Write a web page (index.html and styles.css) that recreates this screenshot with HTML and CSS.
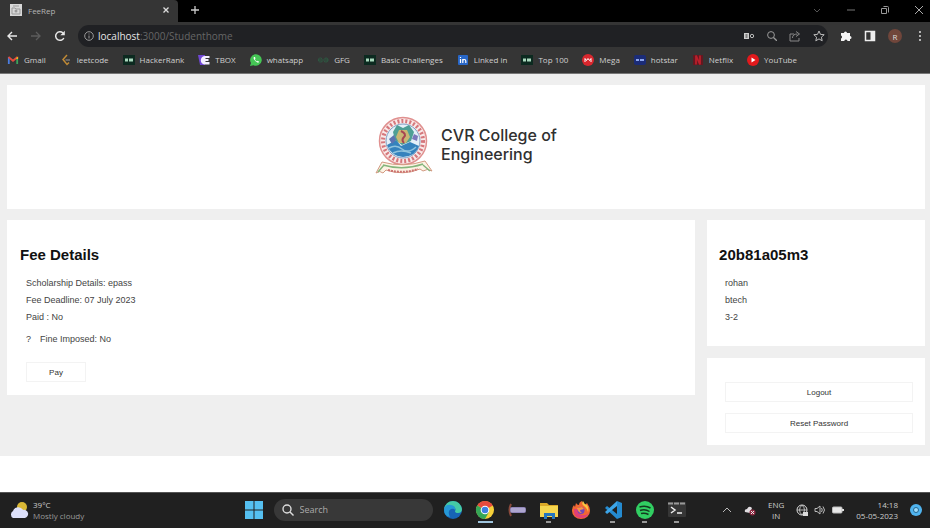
FILE: index.html
```html
<!DOCTYPE html>
<html lang="en">
<head>
<meta charset="utf-8">
<title>FeeRep</title>
<link rel="stylesheet" href="styles.css">
</head>
<body>
<header class="browser">
  <div class="tabs">
    <div class="tab">
      <svg class="i12" viewBox="0 0 12 12"><rect width="12" height="12" fill="#d8d8d8"/><path d="M2 4h3l1 1h4v5H2zM3 2h6" fill="none" stroke="#999"/><circle cx="6" cy="7" r="1.5" fill="#999"/></svg>
      <span class="tab-title">FeeRep</span>
      <button class="icon-btn" aria-label="Close tab"><svg class="i8" viewBox="0 0 8 8"><path d="M1.500 1.500l5 5m0-5l-5 5" stroke="#ddd" stroke-width="1.300"/></svg></button>
    </div>
    <button class="icon-btn new-tab" aria-label="New tab"><svg class="i8" viewBox="0 0 8 8"><path d="M4 0v8M0 4h8" stroke="#ccc" stroke-width="1.300"/></svg></button>
    <div class="window-controls">
      <button class="icon-btn" aria-label="Tab search"><svg class="i8" viewBox="0 0 8 8"><path d="M1 3l3 3 3-3" fill="none" stroke="#555"/></svg></button>
      <button class="icon-btn" aria-label="Minimise"><svg class="i8" viewBox="0 0 8 8"><path d="M0 4h8" stroke="#777"/></svg></button>
      <button class="icon-btn" aria-label="Restore"><svg class="i8" viewBox="0 0 8 8"><path d="M.5 2.500h5v5h-5zM2.500 .5h4q1 0 1 1v5" fill="none" stroke="#999"/></svg></button>
      <button class="icon-btn" aria-label="Close"><svg class="i8" viewBox="0 0 8 8"><path d="M0 0l8 8M8 0L0 8" stroke="#aaa"/></svg></button>
    </div>
  </div>
  <div class="toolbar">
    <button class="icon-btn" aria-label="Back"><svg class="i12" viewBox="0 0 12 12"><path d="M11 6H2m4-4L2 6l4 4" fill="none" stroke="#e8e8e8" stroke-width="1.400"/></svg></button>
    <button class="icon-btn" aria-label="Forward"><svg class="i12" viewBox="0 0 12 12"><path d="M1 6h9M6 2l4 4-4 4" fill="none" stroke="#5c5c5c" stroke-width="1.300"/></svg></button>
    <button class="icon-btn" aria-label="Reload"><svg class="i12" viewBox="0 0 12 12"><path d="M9.800 8A4.300 4.300 0 1 1 9 3" fill="none" stroke="#e8e8e8" stroke-width="1.500"/><path d="M10.800 .8v4.500H6.300z" fill="#e8e8e8"/></svg></button>
    <label class="address">
      <svg class="i10" viewBox="0 0 10 10"><circle cx="5" cy="5" r="4.300" fill="none" stroke="#999"/><path d="M5 4.500V7.500M5 2.500v1" stroke="#999"/></svg>
      <span class="url"><b>localhost</b>:3000/Studenthome</span>
      <svg class="i12" viewBox="0 0 12 12"><path d="M1 3h5v6H1z" fill="#ccc"/><path d="M2.500 5h2m-2 2h2" stroke="#333"/><circle cx="9" cy="6" r="1.700" fill="none" stroke="#bbb"/></svg>
      <svg class="i10" viewBox="0 0 10 10"><circle cx="4" cy="4" r="3.400" fill="none" stroke="#999"/><path d="M6.500 6.500L10 10" stroke="#999" stroke-width="1.300"/></svg>
      <svg class="i12" viewBox="0 0 12 12"><path d="M5 4H1v7h9V8M3.500 8q0-4 5-4M7 1.500L10.500 4 7 6.500" fill="none" stroke="#888"/></svg>
      <svg class="i12" viewBox="0 0 12 12"><path d="M6 1l1.500 3.400 3.700.3-2.800 2.500.8 3.600L6 8.900l-3.200 1.900.8-3.600L.8 4.700l3.700-.3z" fill="none" stroke="#bbb"/></svg>
    </label>
    <button class="icon-btn" aria-label="Extensions"><svg class="i12" viewBox="0 0 12 12"><path d="M1 3h3a1.500 1.500 0 1 1 3 0h3v3a1.500 1.500 0 1 1 0 3v2H7.500a1.600 1.600 0 0 0-3.200 0H1V8.500a1.600 1.600 0 0 0 0-3z" fill="#f5f5f5"/></svg></button>
    <button class="icon-btn" aria-label="Side panel"><svg class="i12" viewBox="0 0 12 12"><path d="M1.500 1.500h9v9h-9z" fill="none" stroke="#eee" stroke-width="1.500"/><path d="M6.500 1h4v10h-4z" fill="#eee"/></svg></button>
    <button class="icon-btn avatar" aria-label="Profile">R</button>
    <button class="icon-btn" aria-label="Menu"><svg class="i12" viewBox="0 0 12 12"><g fill="#ddd"><circle cx="6" cy="2" r="1"/><circle cx="6" cy="6" r="1"/><circle cx="6" cy="10" r="1"/></g></svg></button>
  </div>
  <nav class="bookmarks" aria-label="Bookmarks">
    <a href="#"><svg class="i12" viewBox="0 0 12 12"><path d="M1.800 10V3" stroke="#4b7de0" stroke-width="1.800"/><path d="M10.200 10V3" stroke="#3ba55c" stroke-width="1.800"/><path d="M1.500 3L6 6.800 10.500 3" fill="none" stroke="#e34a3d" stroke-width="1.800"/><path d="M9.300 4l1.800-1.500V5H9.300z" fill="#f1b51c"/></svg>Gmail</a>
    <a href="#"><svg class="i12" viewBox="0 0 12 12"><path d="M7 1L3 5.500 7 10.500l2-2" fill="none" stroke="#c08a35" stroke-width="1.500"/><path d="M5.500 6H10" stroke="#999"/></svg>leetcode</a>
    <a href="#"><svg class="i12" viewBox="0 0 12 12"><path d="M0 1h12v10H0z" fill="#0c2a20"/><path d="M2 4.500h3v3H2zm4 0h4v3H6z" fill="#a9d9bd"/></svg>HackerRank</a>
    <a href="#"><svg class="i12" viewBox="0 0 12 12"><path d="M0 1h7v10H2z" fill="#7047d4"/><path d="M11.500 2H7a4 4 0 0 0 0 8.500h4.500V8H7.500V7h3V5h-3V4h4z" fill="#f4f0ff"/></svg>TBOX</a>
    <a href="#"><svg class="i12" viewBox="0 0 12 12"><path d="M0 12l1-3a5.800 5.800 0 1 1 2.400 2.200z" fill="#45c655"/><path d="M4 3q-1 1 .5 3T8 8.800L9.200 8 7.800 6.800l-.8.7Q5.500 6.500 4.900 5.200l.6-.7L5 3z" fill="#fff"/></svg>whatsapp</a>
    <a href="#"><svg class="i12" viewBox="0 0 12 12"><path d="M5 4.500Q1.500 3 1.500 6H11Q11 3 7.500 4.500M1.500 6q0 3 4 1.500M11 6q0 3-4 1.500" fill="none" stroke="#2d5b43"/></svg>GFG</a>
    <a href="#"><svg class="i12" viewBox="0 0 12 12"><path d="M0 1h12v10H0z" fill="#0c2a20"/><path d="M2 4.500h3v3H2zm4 0h4v3H6z" fill="#a9d9bd"/></svg>Basic Challenges</a>
    <a href="#"><svg class="i12" viewBox="0 0 12 12"><rect x="1" y="1" width="10" height="10" rx="1" fill="#2867c8"/><path d="M3.500 5v4M3.500 3v1M5.800 9V5m0 2q0-1.500 1.500-1.500T8.800 7v2" fill="none" stroke="#fff" stroke-width="1.200"/></svg>Linked in</a>
    <a href="#"><svg class="i12" viewBox="0 0 12 12"><path d="M0 1h12v10H0z" fill="#0c2a20"/><path d="M2 4.500h3v3H2zm4 0h4v3H6z" fill="#a9d9bd"/></svg>Top 100</a>
    <a href="#"><svg class="i12" viewBox="0 0 12 12"><circle cx="6" cy="6" r="6" fill="#d9272e"/><path d="M3 8V4.500l1.500 2L6 4.500 7.500 6.500 9 4.500V8" fill="none" stroke="#fff"/></svg>Mega</a>
    <a href="#"><svg class="i12" viewBox="0 0 12 12"><rect y="1" width="12" height="10" rx="2" fill="#1b2c77"/><path d="M2 6h3m1 0h4" stroke="#8ba5ee" stroke-width="2"/></svg>hotstar</a>
    <a href="#"><svg class="i12" viewBox="0 0 12 12"><path d="M1 1h10v10H1z" fill="#641820"/><path d="M4 10.500v-9l4 9v-9" fill="none" stroke="#b91f2b" stroke-width="1.800"/></svg>Netflix</a>
    <a href="#"><svg class="i12" viewBox="0 0 12 12"><circle cx="6" cy="6" r="6" fill="#e2191c"/><path d="M4.500 3.500v5L8.500 6z" fill="#fff"/></svg>YouTube</a>
  </nav>
</header>

<main class="page">
  <div class="dashboard">
    <section class="card banner">
      <svg class="crest" viewBox="0 0 58 58">
        <circle cx="28" cy="25" r="23.500" fill="#f9e9e8" stroke="#e0908f" stroke-width="1.500"/>
        <circle cx="28" cy="25" r="20" fill="none" stroke="#d5777c" stroke-width="4" stroke-dasharray="2 2"/>
        <circle cx="28" cy="25" r="17" fill="#e4f0f8" stroke="#7f9fc4"/>
        <path d="M12 29l9-5 5 6 9-4 9 4Q41 40 28 41 16 40 12 29z" fill="#3582bd"/>
        <path d="M18 16l4-7 6 3 6-3 5 7-3 9-9 4-7-5z" fill="#4f9f95"/>
        <path d="M24 14h8l3 7-4 6h-7l-3-6z" fill="#c9b674"/>
        <path d="M26 15q6 3 3 6t0 6" fill="none" stroke="#a84452" stroke-width="2"/>
        <path d="M14 23l5-4 2 5-4 4z" fill="#5c72b2"/>
        <path d="M39 18l4 2-1 5-5-2z" fill="#7d78bb"/>
        <path d="M14 32q7-4 13 1t14-2M18 37q8-4 18 0" fill="none" stroke="#8fc3dd" stroke-width="1.500"/>
        <path d="M7 46Q28 52 50 45l7 10q-5-3-9 0l-3-2q-17 7-34 1l-3 3q-3-3-7 0z" fill="#fdf3e4" stroke="#d39a82"/>
        <path d="M8 49q20 6 40-1M3 56l6-7m39 0l7 6" fill="none" stroke="#84b57c" stroke-width="1.500"/>
        <path d="M13 54q16 4 30-1" fill="none" stroke="#cc7170" stroke-width="2" stroke-dasharray="2 1"/>
      </svg>
      <p class="college">CVR College of<br>Engineering</p>
    </section>
    <section class="card fees">
      <h1>Fee Details</h1>
      <div class="details">
        <p>Scholarship Details: epass</p>
        <p>Fee Deadline: 07 July 2023</p>
        <p>Paid : No</p>
        <p class="fine"><span>?</span><span>Fine Imposed: No</span></p>
        <button class="action pay">Pay</button>
      </div>
    </section>
    <aside class="side">
      <section class="card profile">
        <h1>20b81a05m3</h1>
        <div class="details">
          <p>rohan</p>
          <p>btech</p>
          <p>3-2</p>
        </div>
      </section>
      <section class="card account">
        <button class="action">Logout</button>
        <button class="action">Reset Password</button>
      </section>
    </aside>
  </div>
</main>

<footer class="taskbar">
  <div class="weather">
    <svg class="i20" viewBox="0 0 20 20"><circle cx="13" cy="7" r="5" fill="#d9b735"/><path d="M4 18a4 4 0 0 1 0-7 5.500 5.500 0 0 1 10-1 4 4 0 0 1 2 8z" fill="#dde0fa"/></svg>
    <p>39°C<br><span>Mostly cloudy</span></p>
  </div>
  <div class="apps">
    <button class="icon-btn" aria-label="Start"><svg class="i20" viewBox="0 0 20 20"><path d="M1 1h8.500v8.500H1zM10.500 1H19v8.500h-8.500zM1 10.500h8.500V19H1zM10.500 10.500H19V19h-8.500z" fill="#55bff0"/></svg></button>
    <label class="search">
      <svg class="i12" viewBox="0 0 12 12"><circle cx="5" cy="5" r="4" fill="none" stroke="#ddd" stroke-width="1.400"/><path d="M8 8l3.500 3.500" stroke="#ddd" stroke-width="1.400"/></svg>
      <input type="text" placeholder="Search" aria-label="Search">
    </label>
    <div class="pinned">
    <button class="icon-btn" aria-label="Edge"><svg class="i20" viewBox="0 0 20 20"><circle cx="10" cy="10" r="9" fill="#1764b6"/><path d="M1 9Q3 1 10 1t9 8q0 4-4 4-3 0-3-2 1-1 0-3Q7 3 1 9z" fill="#45cba5"/><path d="M1 10q1-6 7-5 5 1 4 5-1-2-4-1-4 2-1 8-6-1-6-7z" fill="#2698d6"/></svg></button>
    <button class="icon-btn active" aria-label="Chrome"><svg class="i20" viewBox="0 0 20 20"><circle cx="10" cy="10" r="9" fill="#f5cf39"/><path d="M10 10L2.200 5.500A9 9 0 0 1 17.800 5.500z" fill="#e54b3e"/><path d="M10 10L2.200 5.500A9 9 0 0 0 10 19l3.800-6.800z" fill="#35a657"/><circle cx="10" cy="10" r="4.300" fill="#fff"/><circle cx="10" cy="10" r="3.300" fill="#3d7fe0"/></svg></button>
    <button class="icon-btn" aria-label="Eclipse"><svg class="i20" viewBox="0 0 20 20"><path d="M4 4Q1 10 4 16" fill="none" stroke="#8a4a3c" stroke-width="2"/><rect x="3" y="7" width="16" height="6" rx="2" fill="#8f85b8"/><path d="M4 9h14M4 11h14" stroke="#cbc7e6"/></svg></button>
    <button class="icon-btn running" aria-label="File Explorer"><svg class="i20" viewBox="0 0 20 20"><path d="M1 3h7l2 2h9v12H1z" fill="#dba927"/><path d="M1 6h18v11H1z" fill="#f5d64f"/><path d="M5 13h11v6h-3v-3H8v3H5z" fill="#2475be"/></svg></button>
    <button class="icon-btn" aria-label="Firefox"><svg class="i20" viewBox="0 0 20 20"><path d="M5 3q1 2 3 2 0-3 3-4 0 2 3 4l2-2q3 4 3 8a9 8 0 0 1-18 0q0-4 2-6l1 2z" fill="#f16733"/><path d="M3 9q-1 9 7 9 6 0 8-5-3 3-7 2-5-1-4-6z" fill="#df3e78"/><path d="M12 1q1 3 4 4 2 3 1 7-1-4-4-6-3-2-1-5z" fill="#f8c641"/><circle cx="10" cy="10.500" r="3.500" fill="#7146bd"/><path d="M6 8l5-1 2 2-4 1q0 2 2 3-4 0-5-5z" fill="#f69445"/></svg></button>
    <button class="icon-btn running" aria-label="Visual Studio Code"><svg class="i20" viewBox="0 0 20 20"><path d="M14 1l5 2v14l-5 2-12-11 2-2 10 8z" fill="#258bd1"/><path d="M14 1v5L4 14l-2-2z" fill="#3da6e9"/></svg></button>
    <button class="icon-btn running" aria-label="Spotify"><svg class="i20" viewBox="0 0 20 20"><circle cx="10" cy="10" r="9" fill="#31ce62"/><path d="M4.500 7q6-2 11 1M5 10.500q5-2 9.500 1M6 13.500q4-1 7.500 1" fill="none" stroke="#14391f" stroke-width="1.500"/></svg></button>
    <button class="icon-btn running" aria-label="Terminal"><svg class="i20" viewBox="0 0 20 20"><rect x="1" y="2" width="18" height="15" rx="1" fill="#363636"/><path d="M1 3.500h18" stroke="#999" stroke-width="2" stroke-dasharray="5 1"/><path d="M4 7l4 3-4 3m6 0h5" fill="none" stroke="#eee" stroke-width="1.500"/></svg></button>
    </div>
  </div>
  <div class="tray">
    <svg class="i10" viewBox="0 0 10 10"><path d="M1 7l4-4 4 4" fill="none" stroke="#bbb"/></svg>
    <svg class="i12" viewBox="0 0 12 12"><path d="M1 8q-1-3 2-3 2-4 5-1l-2 5z" fill="#e0dce0"/><circle cx="8.500" cy="8.500" r="3" fill="#8d2840"/><path d="M7 7l3 3m0-3l-3 3" stroke="#eee"/></svg>
    <p class="lang">ENG<br>IN</p>
    <div class="status">
      <svg class="i12" viewBox="0 0 12 12"><circle cx="6" cy="6" r="5" fill="none" stroke="#ddd"/><path d="M1 6h10M6 1Q1 6 6 11M6 1q5 5 0 10" fill="none" stroke="#bbb"/><path d="M7 8h5v4H7z" fill="#ddd"/></svg>
      <svg class="i12" viewBox="0 0 12 12"><path d="M1 4.500h2L6 2v8L3 7.500H1zM7.500 4q1.500 2 0 4M9 2.500q3 3.500 0 7" fill="none" stroke="#bbb"/></svg>
      <svg class="i12" viewBox="0 0 12 12"><rect x=".5" y="3" width="9.500" height="6" rx="1" fill="#e8e8e8" stroke="#bbb"/><path d="M11 5v2" stroke="#ddd" stroke-width="2"/></svg>
    </div>
    <p class="clock">14:18<br>05-05-2023</p>
    <svg class="i12" viewBox="0 0 12 12"><circle cx="6" cy="6" r="6" fill="#4fb3ee"/><circle cx="6" cy="6" r="2.500" fill="#9edcfc" stroke="#23648c"/></svg>
  </div>
</footer>
</body>
</html>
```
FILE: styles.css
```css
* {
  box-sizing: border-box;
}

body {
  margin: 0;
  min-height: 100vh;
  display: flex;
  flex-direction: column;
  background: #fff;
  font-family: "Liberation Sans", Arial, sans-serif;
  font-size: 8px;
}

p,
h1 {
  margin: 0;
}

svg {
  display: block;
  flex: none;
}

.i8 { width: 8px; height: 8px; }
.i10 { width: 10px; height: 10px; }
.i12 { width: 12px; height: 12px; }
.i20 { width: 20px; height: 20px; }

.icon-btn {
  flex: none;
  padding: 0;
  border: 0;
  background: none;
  color: inherit;
  font: inherit;
}

/* Browser window */
.browser {
  background: #353535;
  color: #b4b4b4;
  font-family: "Open Sans", sans-serif;
  border-bottom: 1px solid #777;
}

.tabs {
  display: flex;
  align-items: center;
  height: 22px;
  padding-bottom: 2px;
  background: #000;
}

.tab {
  display: flex;
  align-items: center;
  align-self: flex-start;
  gap: 6px;
  width: 178px;
  height: 22px;
  padding: 0 8px 2px 10px;
  border-radius: 0 4px 0 0;
  background: #353535;
}

.tab-title {
  flex: 1;
}

.new-tab {
  margin-left: 13px;
}

.window-controls {
  display: flex;
  gap: 26px;
  margin-left: auto;
  padding-right: 7px;
}

.toolbar {
  display: flex;
  align-items: center;
  gap: 12px;
  height: 28px;
  padding: 0 4px 0 6px;
}

.address {
  flex: 1;
  display: flex;
  align-items: center;
  gap: 12px;
  height: 22px;
  padding: 0 3px 0 6px;
  border-radius: 11px;
  background: #202124;
}

.url {
  flex: 1;
  margin-left: -8px;
  color: #666;
  font-size: 10px;
}

.url b {
  color: #e6e6e6;
  font-weight: 400;
}

.avatar {
  width: 14px;
  height: 14px;
  border-radius: 50%;
  background: #70463b;
  color: #ddd;
}

.bookmarks {
  display: flex;
  gap: 14px;
  height: 23px;
  padding: 0 7px 4px;
  overflow: hidden;
}

.bookmarks a {
  display: flex;
  align-items: center;
  gap: 5px;
  color: #d0d0d0;
  text-decoration: none;
  white-space: nowrap;
}

/* Student dashboard */
.page {
  flex: 1;
}

.dashboard {
  display: grid;
  grid-template-columns: 60fr 19fr;
  gap: 11px 12px;
  align-items: start;
  padding: 11px 5px 11px 7px;
  background: #efefef;
}

.card {
  background: #fff;
}

.banner {
  grid-column: 1 / -1;
  display: flex;
  justify-content: center;
  align-items: center;
  gap: 8px;
  padding: 31px 0 35px;
}

.crest {
  width: 58px;
  height: 58px;
}

.college {
  color: #303030;
  font-family: Inter, sans-serif;
  font-size: 16px;
  font-weight: 500;
  line-height: 19px;
}

.fees {
  padding: 26px 13px 13px;
}

.card h1 {
  color: #111;
  font-size: 15px;
  line-height: 17px;
}

.details {
  padding: 12px 6px 0;
  color: #444;
  font-size: 9px;
  line-height: 17px;
}

.fine {
  display: flex;
  gap: 9px;
  margin-top: 5px;
}

.action {
  display: block;
  width: 100%;
  height: 20px;
  padding: 0;
  border: 1px solid #f3f3f3;
  background: #fff;
  color: #333;
  font: 8px "Liberation Sans", Arial, sans-serif;
}

.pay {
  width: 60px;
  margin-top: 14px;
}

.side {
  display: grid;
  gap: 12px;
}

.profile {
  padding: 26px 12px 20px;
}

.account {
  display: grid;
  gap: 11px;
  padding: 24px 12px 12px 18px;
}

/* Taskbar */
.taskbar {
  display: grid;
  grid-template-columns: 1fr auto 1fr;
  align-items: center;
  height: 36px;
  padding-bottom: 2px;
  border-top: 1px solid #555;
  background: #202020;
  color: #ccc;
  font-family: "Open Sans", sans-serif;
  line-height: 11px;
}

.weather {
  display: flex;
  align-items: center;
  gap: 4px;
  padding-left: 9px;
}

.weather span {
  color: #999;
}

.apps {
  display: flex;
  align-items: center;
  gap: 10px;
}

.search {
  display: flex;
  align-items: center;
  gap: 6px;
  width: 159px;
  height: 22px;
  padding: 0 8px;
  border-radius: 11px;
  background: #383838;
}

.search input {
  flex: 1;
  min-width: 0;
  padding: 0;
  border: 0;
  background: none;
  color: #ccc;
  font: 9px "Open Sans", sans-serif;
}

.search input::placeholder {
  color: #aaa;
}

.pinned {
  display: flex;
  gap: 12px;
}

.pinned .icon-btn {
  height: 26px;
  padding: 3px 0 1px;
  border-bottom: 2px solid transparent;
}

.pinned .active {
  border-image: linear-gradient(90deg, transparent 20%, #9fc4dc 20% 80%, transparent 80%) 2;
}

.pinned .running {
  border-image: linear-gradient(90deg, transparent 40%, #999 40% 60%, transparent 60%) 2;
}

.tray {
  display: flex;
  align-items: center;
  justify-content: flex-end;
  gap: 12px;
  padding-right: 8px;
}

.lang {
  text-align: center;
}

.status {
  display: flex;
  gap: 6px;
}

.clock {
  text-align: right;
}
```
